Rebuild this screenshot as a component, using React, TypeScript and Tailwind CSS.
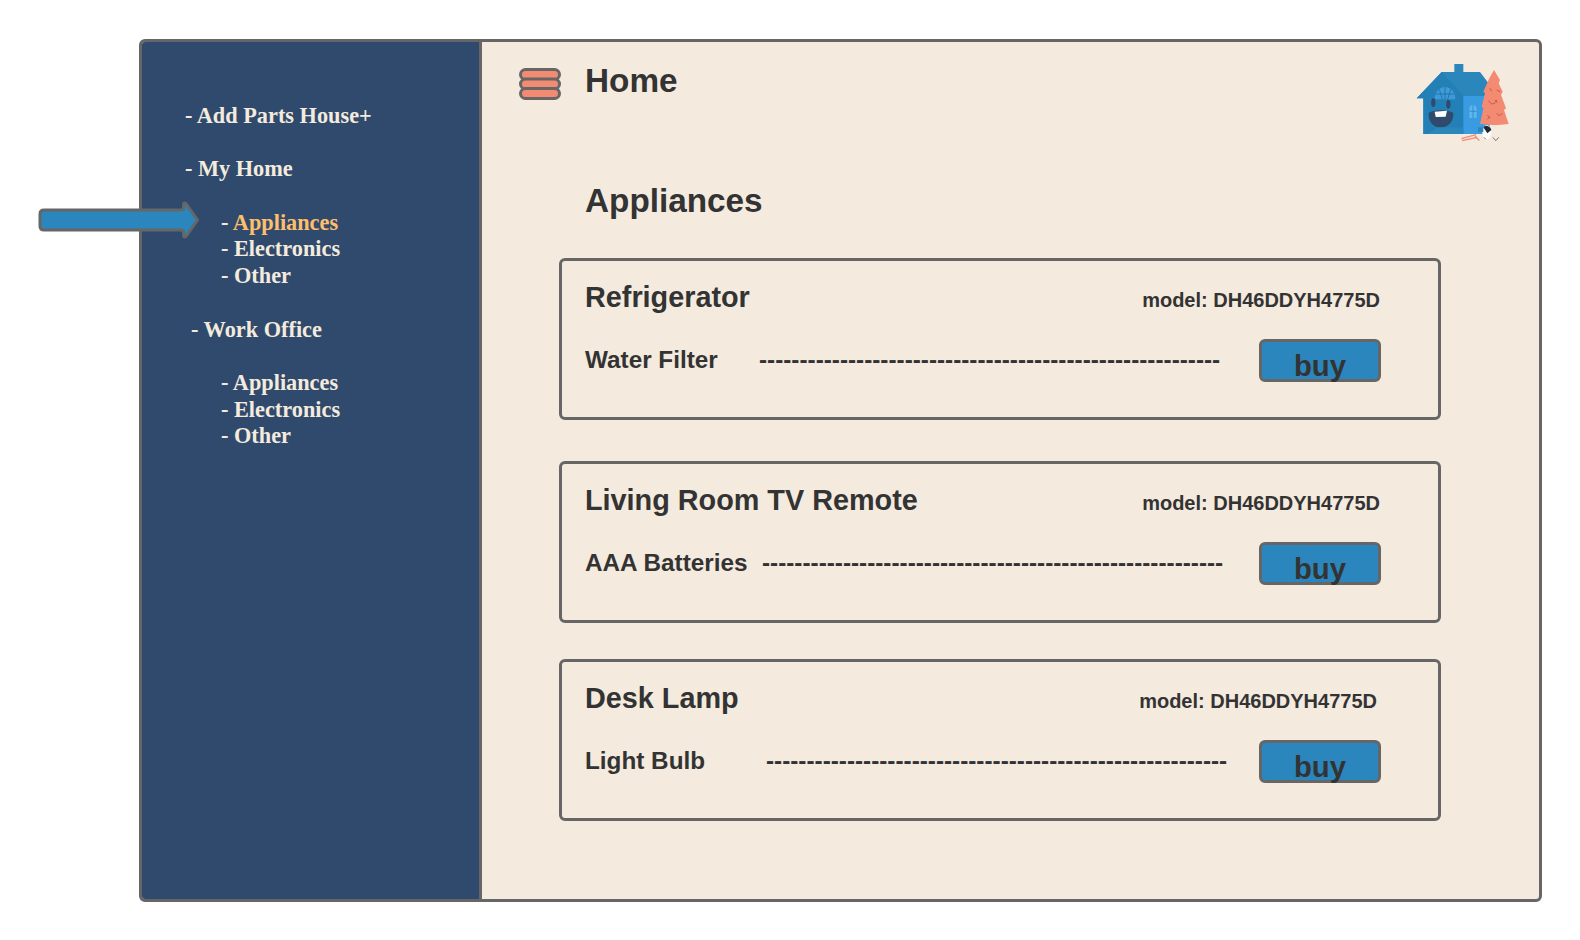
const Logo = () => (
  <svg width="130" height="100" viewBox="0 0 390 300" className="block">
    <rect x="163" y="42" width="27" height="26" fill="#2a86bb" />
    <path d="M125 66 H240 L268 103 V252 H70 V145 H50 Z" fill="#2a86bb" />
    <path d="M125 66 L192 138 V252 H70 V145 H50 Z" fill="#2380b6" />
    <rect x="190" y="138" width="78" height="114" fill="#3a9ce0" />
    <path d="M104 148 A31 37 0 0 1 166 148 Z" fill="#3f9bd8" />
    <path d="M135 111 V148 M118 118 L127 148 M152 118 L143 148 M108 132 H162" stroke="#1f6c9f" strokeWidth="2.5" />
    <ellipse cx="100" cy="158" rx="6.5" ry="13" fill="#2f4a6d" />
    <ellipse cx="145" cy="163" rx="6.5" ry="13" fill="#2f4a6d" />
    <path d="M86 190 C95 178 150 178 160 190 C162 222 135 235 118 233 C100 232 84 215 86 190 Z" fill="#2f4a6d" />
    <path d="M104 185 L141 182 L137 200 L107 201 Z" fill="#ffffff" />
    <path d="M84 252 L112 232 H190 V252 Z" fill="#2a86bb" />
    <path d="M208 204 V178 A11 13 0 0 1 230 178 V204 Z" fill="#5cb5ef" />
    <path d="M219 165 V204 M208 184 H230" stroke="#2380b6" strokeWidth="2" />
    <path d="M282 60 L300 90 L296 100 L308 125 L303 135 L318 175 L312 180 L326 222 L285 226 L240 222 L250 175 L245 170 L255 130 L250 125 L268 85 Z" fill="#f28b72" />
    <path d="M290 120 L300 125 M270 115 L275 124 M266 152 C272 165 285 165 290 150 M285 150 L292 158 M262 195 L270 205 M290 190 C295 198 302 198 306 190 M262 208 L270 200" stroke="#b9503a" strokeWidth="2.5" fill="none" />
    <path d="M285 226 V262" stroke="#f4eade" strokeWidth="5" />
    <ellipse cx="260" cy="247" rx="13" ry="22" fill="#ffffff" />
    <path d="M250 232 A14 14 0 0 1 274 240 L262 250 Z" fill="#1f2937" />
    <rect x="234" y="232" width="16" height="14" fill="#2a86bb" />
    <path d="M184 266 L228 254 M186 272 L232 262 M225 258 L238 272" stroke="#f28b72" strokeWidth="4" />
    <path d="M278 262 L288 272 L296 262 M252 262 L258 268" stroke="#777777" strokeWidth="3" fill="none" />
  </svg>
);

const Item = ({ title, part, model, dashGap, modelShift }: { title: string; part: string; model: string; dashGap: string; modelShift: string }) => (
  <div className="h-[162px] w-[882px] rounded-md border-[3px] border-[#666666] pl-[23px] pt-[18px]">
    <div className="flex h-[37px] items-center justify-between">
      <span className="text-[28.8px] font-bold leading-[37px] text-[#333333]">{title}</span>
      <span className={`pt-[6px] text-[20px] font-bold leading-[37px] text-[#333333] ${modelShift}`}>{model}</span>
    </div>
    <div className="mt-[23px] flex items-start">
      <span className={`text-[24.3px] font-bold leading-[42px] text-[#333333] ${dashGap}`}>{part}</span>
      <span className="whitespace-nowrap text-[24.3px] font-bold leading-[42px] text-[#333333]">{"-".repeat(57)}</span>
      <button className="ml-auto mr-[57px] h-[43px] w-[122px] rounded-md border-[3px] border-[#666666] bg-[#2a86bd] text-[29.3px] font-bold leading-[48px] text-[#333333]">buy</button>
    </div>
  </div>
);

const Group = ({ items, active }: { items: string[]; active?: boolean }) => (
  <div className="pl-[36px]">
    {items.map((t, i) => (
      <div key={t}>
        - <span className={active && i === 0 ? "text-[#ffbe6b]" : ""}>{t}</span>
      </div>
    ))}
  </div>
);

export default function App() {
  return (
    <div className="relative h-[940px] w-[1580px] overflow-hidden bg-white pl-[139px] pt-[39px] font-['Liberation_Sans',sans-serif]">
      <div className="flex h-[863px] w-[1403px] overflow-hidden rounded-md border-[3px] border-[#666666] bg-[#f4eade]">
        <aside className="h-full w-[340px] shrink-0 border-r-[3px] border-[#666666] bg-[#2f4a6d] pl-[43px] pt-[61px] font-['Liberation_Serif',serif] text-[22.3px] font-bold leading-[26.7px] text-[#f4eade]">
          <div>- Add Parts House+</div>
          <div className="mt-[26.7px]">- My Home</div>
          <div className="mt-[26.7px]"><Group active items={["Appliances", "Electronics", "Other"]} /></div>
          <div className="mt-[26.7px] pl-[6px]">- Work Office</div>
          <div className="mt-[26.7px]"><Group items={["Appliances", "Electronics", "Other"]} /></div>
        </aside>
        <main className="relative min-w-0 flex-1">
          <header className="flex items-center pl-[37px] pt-[20px]">
            <svg width="42" height="32" viewBox="0 0 42 32" className="mt-[5px] block">
              {[1.5, 11, 20.5].map((y) => (
                <rect key={y} x="1.5" y={y} width="39" height="10" rx="5" fill="#f28b72" stroke="#666666" strokeWidth="3" />
              ))}
            </svg>
            <h1 className="ml-[24px] text-[33.3px] font-bold leading-[38px] text-[#333333]">Home</h1>
          </header>
          <div className="absolute right-[9px] top-[8px]"><Logo /></div>
          <h2 className="ml-[103px] mt-[82px] text-[33.3px] font-bold leading-[38px] text-[#333333]">Appliances</h2>
          <div className="ml-[77px] mt-[38px] flex flex-col">
            <Item title="Refrigerator" part="Water Filter" model="model: DH46DDYH4775D" dashGap="w-[174px]" modelShift="mr-[58px]" />
            <div className="mt-[41px]"><Item title="Living Room TV Remote" part="AAA Batteries" model="model: DH46DDYH4775D" dashGap="w-[177px]" modelShift="mr-[58px]" /></div>
            <div className="mt-[36px]"><Item title="Desk Lamp" part="Light Bulb" model="model: DH46DDYH4775D" dashGap="w-[181px]" modelShift="mr-[61px]" /></div>
          </div>
        </main>
      </div>
      <svg width="166" height="42" viewBox="0 0 166 42" className="absolute left-[38px] top-[200px] block">
        <path d="M6 10 H143 Q145.5 10 145.5 8 V5 Q145.5 2 148 3.5 L159.5 20 L148 36.5 Q145.5 38 145.5 35 V32 Q145.5 30 143 30 H6 Q2 30 2 26 V14 Q2 10 6 10 Z" fill="#2a86bd" stroke="#666666" strokeWidth="3" strokeLinejoin="round" />
      </svg>
    </div>
  );
}
